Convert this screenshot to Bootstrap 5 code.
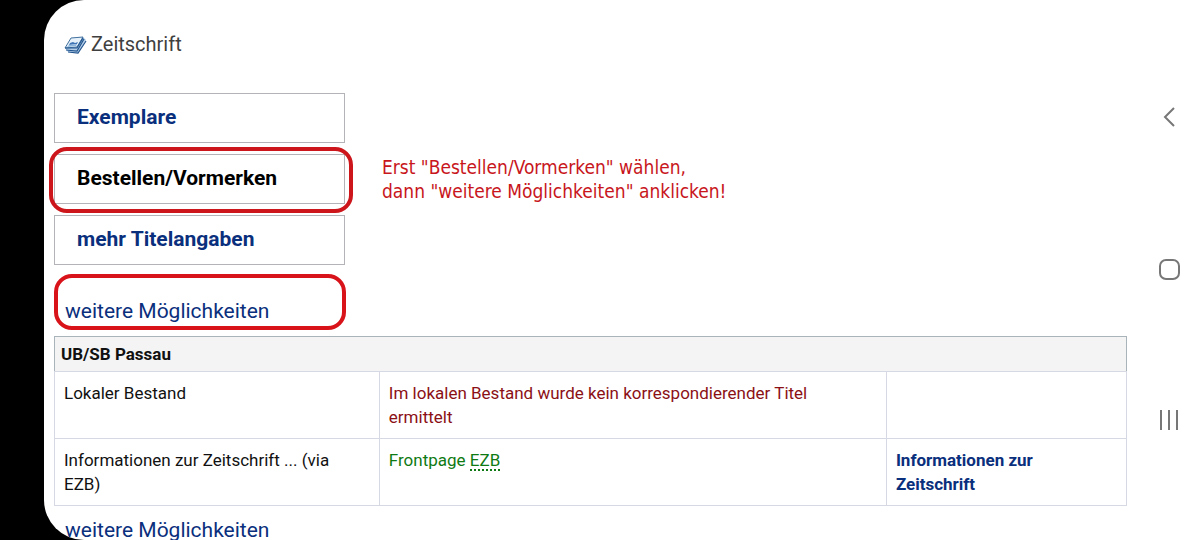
<!DOCTYPE html>
<html lang="de">
<head>
<meta charset="utf-8">
<meta name="viewport" content="width=device-width, initial-scale=1">
<title>Zeitschrift – Bestellen/Vormerken</title>
<link href="https://cdn.jsdelivr.net/npm/bootstrap@5.3.0/dist/css/bootstrap.min.css" rel="stylesheet">
<style>
  body { background: #000; color: #111; font-family: Roboto, "Liberation Sans", sans-serif; font-size: 17px; line-height: 24px; }
  a { color: #0a2f7c; text-decoration: none; }
  .device { padding-left: 44px; }
  .screen { background: #fff; border-radius: 40px 0 0 40px; }
  .content { padding: 32px 11px 0 10px; min-width: 0; }
  .heading { color: #3f3f3f; font-size: 20px; line-height: 24px; padding-left: 10px; margin-bottom: 37px; gap: 4px; }
  .tabs { gap: 11px; width: 291px; }
  .tabs a { display: block; border: 1px solid #b4b4b8; padding: 11px 22px 13px; font-size: 21px; line-height: 24px; font-weight: 700; }
  .tabs a.active { color: #000; }
  .ring { border: 4px solid #d8131a; border-radius: 18px; pointer-events: none; }
  .ring-tab { inset: -8px -9px -10px -6px; border-color: #cc161b; }
  .ring-more { inset: -25px -77px -7px -11px; }
  .hint { color: #c8161c; font-family: "DejaVu Sans Condensed", "Noto Sans", sans-serif; font-size: 19px; line-height: 24px; margin: 62px 0 0 37px; }
  .more { font-size: 21px; line-height: 24px; padding-left: 11px; }
  .more-top { margin: 34px 0 13px; }
  .more-bottom { margin-top: 12px; }
  .holdings { table-layout: fixed; border-collapse: collapse; }
  .holdings th, .holdings td { border: 1px solid #d6d9e4; vertical-align: top; }
  .holdings td { padding: 9px 32px 9px 9px; }
  .holdings th { background: #f4f4f4; border-color: #a9b4ba; border-bottom-color: #d6d9e4; padding: 5px 6px; font-weight: 700; }
  .col-label { width: 30.3%; }
  .col-link { width: 22.4%; }
  .missing { color: #8b1015; }
  .found { color: #0f7a14; }
  .found abbr { text-decoration: none; border-bottom: 2px dotted; cursor: help; display: inline-block; line-height: 18px; }
  .rail { width: 62px; padding: 103px 0 106px; }
  .rail button { width: 28px; height: 28px; line-height: 0; }
</style>
</head>
<body>
<div class="device vh-100">
  <div class="screen d-flex h-100 overflow-hidden">
    <main class="content flex-grow-1">
      <h1 class="heading d-flex align-items-center fw-normal mt-0">
        <svg width="23" height="20" viewBox="0 0 23 20" aria-hidden="true">
          <path d="M1 14 7 4 19 3 22 6 14 19 4 18Z" fill="#b4cee8"/>
          <path d="M7 4 19 3 13 13 1 14Z" fill="#e6f1fa" stroke="#44729f" stroke-width="1"/>
          <path d="M6 9 9 8 11 9 14 8 13 10 5 11Z" fill="#3f74b4"/>
          <path d="M5 11 13 10 12 12 3 13Z" fill="#8fb6dc"/>
          <path d="M1 14 13 14 19 4M2 16 13 17 20 5M4 18 14 19 22 7" fill="none" stroke="#23568f" stroke-width="1.200"/>
        </svg>
        Zeitschrift
      </h1>

      <div class="d-flex">
        <nav class="tabs d-flex flex-column flex-shrink-0" aria-label="Titel">
          <a href="#exemplare">Exemplare</a>
          <a href="#bestellen" class="active position-relative" aria-current="page">Bestellen/Vormerken<span class="ring ring-tab position-absolute"></span></a>
          <a href="#titelangaben">mehr Titelangaben</a>
        </nav>
        <p class="hint">Erst "Bestellen/Vormerken" wählen,<br>dann "weitere Möglichkeiten" anklicken!</p>
      </div>

      <div class="more more-top"><a href="#weitere" class="position-relative d-inline-block">weitere Möglichkeiten<span class="ring ring-more position-absolute"></span></a></div>

      <table class="holdings w-100">
        <colgroup><col class="col-label"><col><col class="col-link"></colgroup>
        <thead><tr><th colspan="3" scope="colgroup">UB/SB Passau</th></tr></thead>
        <tbody>
          <tr><td>Lokaler Bestand</td><td class="missing">Im lokalen Bestand wurde kein korrespondierender Titel ermittelt</td><td></td></tr>
          <tr><td>Informationen zur Zeitschrift ... (via EZB)</td><td class="found">Frontpage <abbr title="Elektronische Zeitschriftenbibliothek">EZB</abbr></td><td><a href="#info" class="fw-bold">Informationen zur Zeitschrift</a></td></tr>
        </tbody>
      </table>

      <div class="more more-bottom"><a href="#weitere">weitere Möglichkeiten</a></div>
    </main>

    <aside class="rail d-flex flex-column justify-content-between align-items-center flex-shrink-0">
      <button type="button" class="btn p-0 border-0" aria-label="Zurück"><svg width="28" height="28" viewBox="0 0 28 28" fill="none" stroke="#777" stroke-width="2"><path d="M19 5 10 14 19 23"/></svg></button>
      <button type="button" class="btn p-0 border-0" aria-label="Startbildschirm"><svg width="28" height="28" viewBox="0 0 28 28" fill="none" stroke="#777" stroke-width="2"><rect x="5" y="5" width="19" height="19" rx="6"/></svg></button>
      <button type="button" class="btn p-0 border-0" aria-label="Letzte Apps"><svg width="28" height="28" viewBox="0 0 28 28" fill="none" stroke="#777" stroke-width="2"><path d="M6 4V24M14 4V24M22 4V24"/></svg></button>
    </aside>
  </div>
</div>
<script src="https://cdn.jsdelivr.net/npm/bootstrap@5.3.0/dist/js/bootstrap.bundle.min.js"></script>
</body>
</html>
